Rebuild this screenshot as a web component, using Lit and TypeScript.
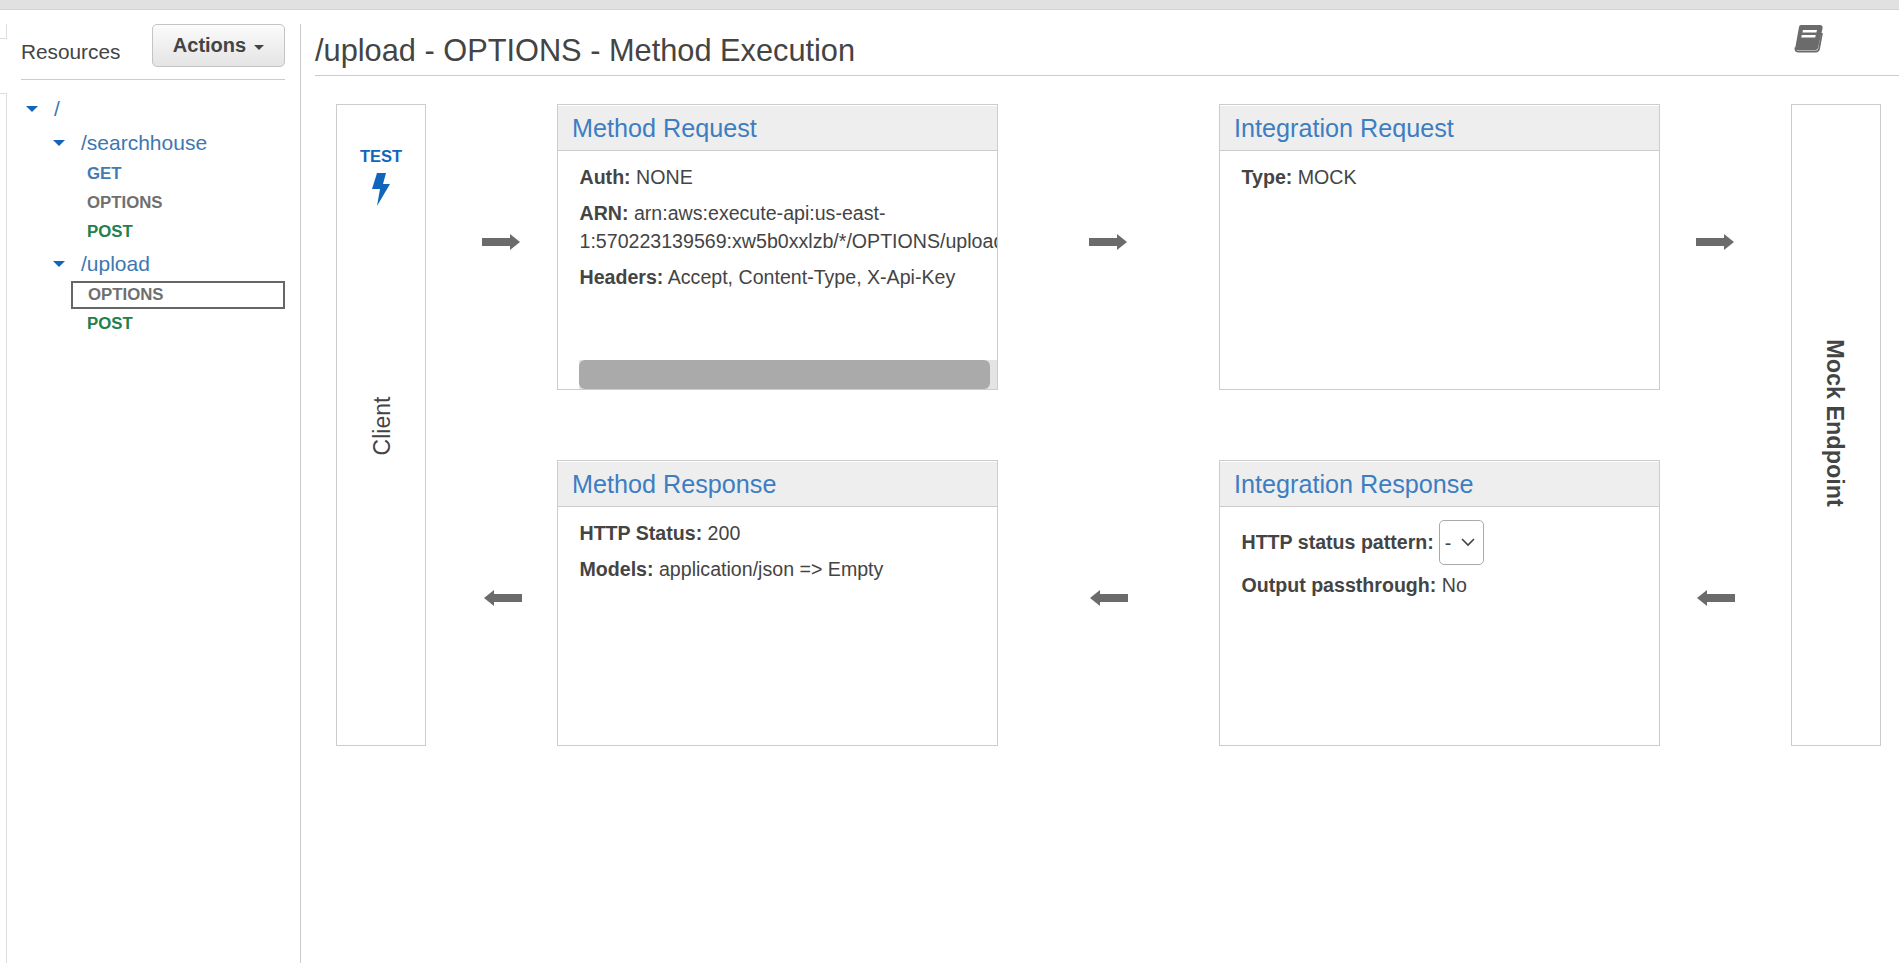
import { LitElement, html, css } from "lit";
import { customElement } from "lit/decorators.js";

const arrowRight = html`<svg width="39" height="16" viewBox="0 0 39 16"><path d="M0 4h28V0l10 8-10 8v-4H0z" fill="#6b6b6b"/></svg>`;
const arrowLeft = html`<svg width="39" height="16" viewBox="0 0 39 16"><path d="M38 4H10V0L0 8l10 8v-4h28z" fill="#6b6b6b"/></svg>`;
const caret = html`<span class="caret"></span>`;

@customElement("app-root")
export class AppRoot extends LitElement {
  static styles = css`
    :host { display: block; width: 1899px; height: 963px; overflow: hidden; background: #fff; color: #444;
      font-family: "Liberation Sans", Arial, sans-serif; font-size: 19.6px; }
    * { box-sizing: border-box; }
    .topbar { height: 10px; background: #e1e1e1; border-bottom: 1px solid #d4d4d4; }
    .page { display: flex; height: 953px; }
    .rail { width: 7px; flex: none; padding-top: 14px; }
    .rail-a { height: 15px; border: 1px solid #ddd; border-left: 0; border-top: 0; }
    .rail-b { height: 870px; margin-top: 54px; border: 1px solid #ddd; border-left: 0; border-bottom: 0; }
    .side { width: 294px; flex: none; margin-top: 14px; padding: 0 15px 0 14px; border-right: 1px solid #ccc; }
    .side-head { display: flex; justify-content: space-between; height: 56px; border-bottom: 1px solid #ccc; }
    .res { font-size: 20.8px; padding-top: 16px; color: #444; }
    .btn { width: 133px; height: 43px; display: flex; align-items: center; justify-content: center; gap: 8px;
      border: 1px solid #c4c4c4; border-radius: 5px; background: linear-gradient(#fbfbfb, #e4e4e4);
      font-weight: 700; font-size: 20px; color: #444; padding-bottom: 1px; }
    .caret { width: 0; height: 0; border: 5px solid transparent; border-top-color: #444; border-bottom: 0; margin-top: 4px; }
    .tree { padding-top: 16px; font-size: 21px; }
    .row { display: flex; align-items: center; height: 26px; color: #3e77b0; }
    .tri { width: 0; height: 0; border: 6.5px solid transparent; border-top: 6.5px solid #1166bb; border-bottom: 0; }
    .r0 { padding-left: 5px; gap: 16px; }
    .r1 { padding-left: 32px; gap: 16px; margin-top: 8px; }
    .r1.up { margin-top: 5px; }
    .m { display: flex; align-items: center; height: 29px; padding-left: 66px; font-size: 16.800px; font-weight: 700; }
    .m.get { color: #3f7cb5; margin-top: 3px; }
    .m.opt { color: #6f6f6f; }
    .m.post { color: #23804a; }
    .m.sel { width: 214px; height: 28px; margin-left: 50px; padding-left: 15px; border: 2px solid #666; margin-top: 4px; }
    .main { flex: 1; min-width: 0; margin-top: 14px; padding-left: 14px; }
    .title { height: 52px; display: flex; justify-content: space-between; border-bottom: 1px solid #ccc; }
    h1 { margin: 0; font-weight: 400; font-size: 30.750px; color: #444; padding-top: 9px; line-height: 36px; }
    .book { margin: 1px 76px 0 0; }
    .grid { display: grid; margin: 28px 0 0 21px;
      grid-template-columns: 90px 131px 441px 221px 441px 131px 90px; grid-template-rows: 286px 70px 286px; }
    .side-box { grid-row: 1 / 4; border: 1px solid #ccc; display: flex; flex-direction: column; align-items: center; position: relative; }
    .test { margin-top: 42px; font-size: 16.500px; font-weight: 700; color: #1166bb; line-height: 18px; }
    .bolt { margin-top: 8px; }
    .vert { writing-mode: vertical-rl; position: absolute; top: 50%; left: 50%; font-size: 23px; white-space: nowrap; }
    .client { transform: translate(-50%, -50%) rotate(180deg); margin-left: 1px; margin-top: 1px; color: #444; }
    .mock { transform: translate(-50%, -50%); font-weight: 700; font-size: 23.400px; margin-left: -2px; margin-top: -2px; }
    .card { border: 1px solid #ccc; display: flex; flex-direction: column; min-width: 0; overflow: hidden; position: relative; }
    .card-h { height: 45px; flex: none; background: #eee; border-bottom: 1px solid #ccc; padding: 8px 14px 0; font-size: 25.200px; line-height: 28px; color: #3d7dc2; margin-top: 1px; }
    .card-b { padding: 12px 21.500px 0; line-height: 28px; font-size: 19.600px; }
    .card-b p { margin: 0 0 8px; }
    .arrow { align-self: center; justify-self: start; display: flex; margin-bottom: 10px; }
    .a1 { margin-left: 56px; grid-column: 2; grid-row: 1; }
    .a2 { margin-left: 91px; grid-column: 4; grid-row: 1; }
    .a3 { margin-left: 36px; grid-column: 6; grid-row: 1; }
    .a4 { margin-left: 58px; grid-column: 2; grid-row: 3; }
    .a5 { margin-left: 92px; grid-column: 4; grid-row: 3; }
    .a6 { margin-left: 37px; grid-column: 6; grid-row: 3; }
    .c1 { grid-column: 3; grid-row: 1; }
    .c2 { grid-column: 5; grid-row: 1; }
    .c3 { grid-column: 3; grid-row: 3; }
    .c4 { grid-column: 5; grid-row: 3; }
    .track { position: absolute; left: 0; right: 0; bottom: 0; height: 29px; background: #e4e4e4; }
    .thumb { position: absolute; left: 21px; right: 7px; top: 0; bottom: 0; background: #aaa; border-radius: 6px; }
    .track-bg { position: absolute; left: 0; width: 21px; top: 0; bottom: 0; background: #fff; }
    .sel-row { display: flex; align-items: center; gap: 5px; margin: 0 0 6px; }
    .sel { position: relative; display: flex; margin-top: 1px; }
    .chev { position: absolute; right: 9px; top: 18px; pointer-events: none; }
    select { appearance: none; width: 45px; height: 45px; font: 19.600px "Liberation Sans", Arial, sans-serif; color: #444; background: #fff; border: 1px solid #aaa; border-radius: 5px; padding: 0 0 0 5px; }
  `;

  render() {
    return html`
      <div class="topbar"></div>
      <div class="page">
        <div class="rail"><div class="rail-a"></div><div class="rail-b"></div></div>
        <aside class="side">
          <div class="side-head">
            <span class="res">Resources</span>
            <div class="btn">Actions ${caret}</div>
          </div>
          <div class="tree">
            <div class="row r0"><span class="tri"></span><span>/</span></div>
            <div class="row r1"><span class="tri"></span><span>/searchhouse</span></div>
            <div class="m get">GET</div>
            <div class="m opt">OPTIONS</div>
            <div class="m post">POST</div>
            <div class="row r1 up"><span class="tri"></span><span>/upload</span></div>
            <div class="m opt sel">OPTIONS</div>
            <div class="m post">POST</div>
          </div>
        </aside>
        <main class="main">
          <div class="title">
            <h1>/upload - OPTIONS - Method Execution</h1>
            <svg class="book" width="30" height="28" viewBox="0 0 30 28">
              <path d="M8 0h19c2 0 3 1.300 2.500 3.500L25 23c-.4 1.500-1.500 2-3 2H4c-1.500 0-2-1-1.700-2.500L6 2C6.300.7 7 0 8 0z" fill="#6b6b6b"/>
              <path d="M2.500 22.500C2 25 3 26.500 5 26.500h18c1.500 0 2.500-.8 3-2.500l3-16" fill="none" stroke="#6b6b6b" stroke-width="1.800"/>
              <path d="M10 5h14l-.6 2.500h-14zM8.800 10h14l-.6 2.500h-14z" fill="#fff"/>
            </svg>
          </div>
          <div class="grid">
            <div class="side-box" style="grid-column:1">
              <div class="test">TEST</div>
              <svg class="bolt" width="18" height="33" viewBox="0 0 18 33"><path d="M5 0h9l-3 11h7L5 33l3-17H0z" fill="#1166bb"/></svg>
              <span class="vert client">Client</span>
            </div>
            <div class="arrow a1">${arrowRight}</div>
            <section class="card c1">
              <div class="card-h">Method Request</div>
              <div class="card-b">
                <p><b>Auth:</b> NONE</p>
                <p><b>ARN:</b> arn:aws:execute-api:us-east-1:570223139569:xw5b0xxlzb/*/OPTIONS/upload</p>
                <p><b>Headers:</b> Accept, Content-Type, X-Api-Key</p>
              </div>
              <div class="track"><div class="track-bg"></div><div class="thumb"></div></div>
            </section>
            <div class="arrow a2">${arrowRight}</div>
            <section class="card c2">
              <div class="card-h">Integration Request</div>
              <div class="card-b"><p><b>Type:</b> MOCK</p></div>
            </section>
            <div class="arrow a3">${arrowRight}</div>
            <div class="side-box" style="grid-column:7"><span class="vert mock">Mock Endpoint</span></div>
            <div class="arrow a4">${arrowLeft}</div>
            <section class="card c3">
              <div class="card-h">Method Response</div>
              <div class="card-b">
                <p><b>HTTP Status:</b> 200</p>
                <p><b>Models:</b> application/json =&gt; Empty</p>
              </div>
            </section>
            <div class="arrow a5">${arrowLeft}</div>
            <section class="card c4">
              <div class="card-h">Integration Response</div>
              <div class="card-b">
                <div class="sel-row"><b>HTTP status pattern:</b><span class="sel"><select><option>-</option></select><svg class="chev" width="14" height="9" viewBox="0 0 14 9"><path d="M1 1l6 6 6-6" fill="none" stroke="#444" stroke-width="1.600"/></svg></span></div>
                <p><b>Output passthrough:</b> No</p>
              </div>
            </section>
            <div class="arrow a6">${arrowLeft}</div>
          </div>
        </main>
      </div>
    `;
  }
}
